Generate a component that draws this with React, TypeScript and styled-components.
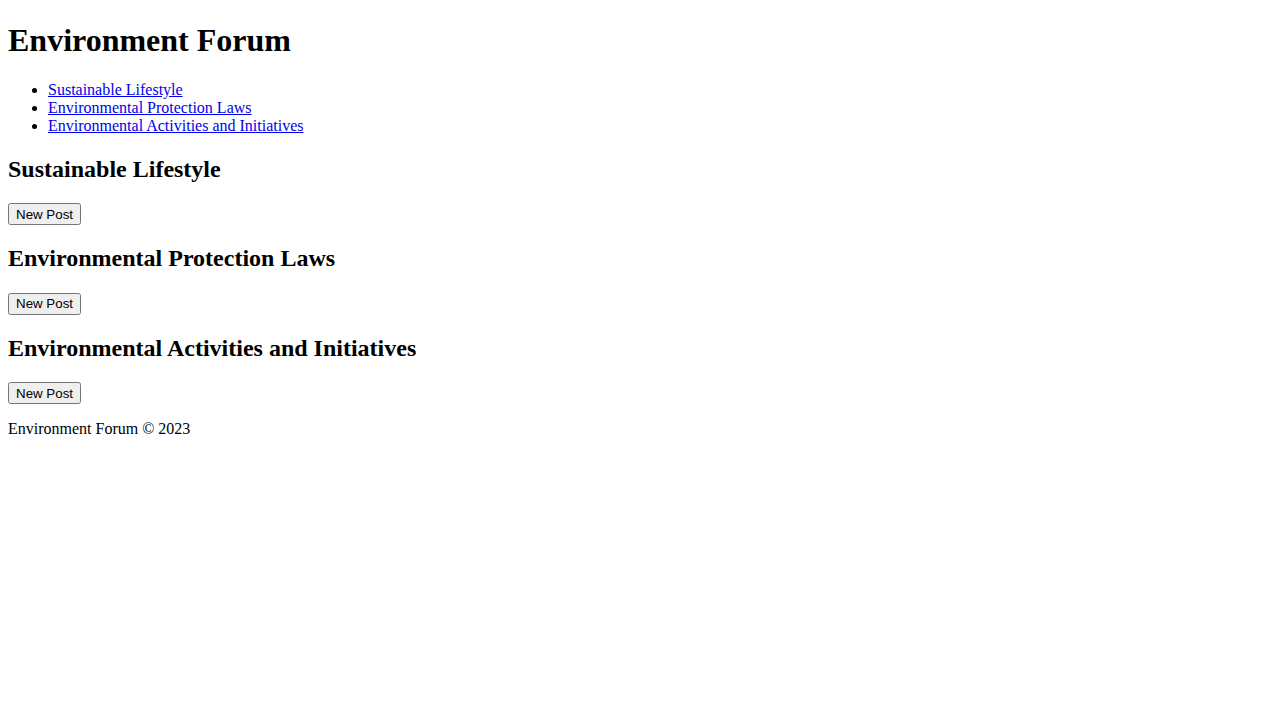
import React from "react";
import styled, { createGlobalStyle } from "styled-components";

const GlobalStyle = createGlobalStyle`
  body {
    margin: 0 8px 8px 8px;
    padding-top: 1px;
    font-family: "Liberation Serif", "Times New Roman", serif;
    font-size: 16px;
    line-height: 1.15;
    color: #000;
    background: #fff;
  }
`;

const Header = styled.header``;

const Title = styled.h1`
  font-size: 2em;
  font-weight: bold;
  line-height: 1.15;
  margin: 0.67em 0;
`;

const NavList = styled.ul`
  list-style: disc;
  margin: 1em 0;
  padding-left: 40px;
`;

const NavLink = styled.a`
  color: #0000ee;
  text-decoration: underline;
`;

const Section = styled.section``;

const SectionTitle = styled.h2`
  font-size: 1.5em;
  font-weight: bold;
  line-height: 1.15;
  margin: 0.83em 0;
`;

const PostButton = styled.button`
  font-family: "Liberation Sans", Arial, sans-serif;
  font-size: 13.3333px;
  line-height: normal;
  height: 22px;
  vertical-align: top;
`;

const Footer = styled.footer``;

const FooterText = styled.p`
  margin: 1em 0;
`;

const topics = [
  { id: "sustainable-lifestyle", title: "Sustainable Lifestyle" },
  { id: "environmental-protection-laws", title: "Environmental Protection Laws" },
  { id: "environmental-activities", title: "Environmental Activities and Initiatives" },
];

export default function App() {
  return (
    <>
      <GlobalStyle />
      <Header>
        <Title>Environment Forum</Title>
        <nav>
          <NavList>
            {topics.map((t) => (
              <li key={t.id}>
                <NavLink href={`#${t.id}`}>{t.title}</NavLink>
              </li>
            ))}
          </NavList>
        </nav>
      </Header>
      <main>
        {topics.map((t) => (
          <Section key={t.id} id={t.id}>
            <SectionTitle>{t.title}</SectionTitle>
            <PostButton type="button">New Post</PostButton>
          </Section>
        ))}
      </main>
      <Footer>
        <FooterText>Environment Forum © 2023</FooterText>
      </Footer>
    </>
  );
}
